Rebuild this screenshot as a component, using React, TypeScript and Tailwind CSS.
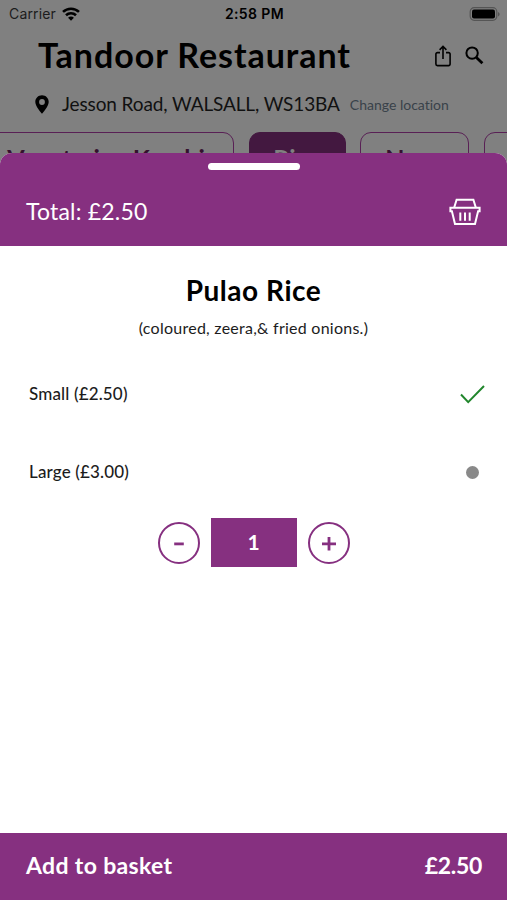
import type { ReactNode } from 'react'

const sizes = [
  { name: 'Small', price: '£2.50' },
  { name: 'Large', price: '£3.00' },
]

function WifiIcon() {
  return (
    <svg width="18" height="14" viewBox="0 0 18 14" fill="none" stroke="#000" strokeWidth="2.6">
      <path d="M1 4.9a11.6 11.6 0 0 1 16 0" />
      <path d="M4 8.3a7.2 7.2 0 0 1 10 0" />
      <path d="M6.1 10.8a4 4 0 0 1 5.8 0L9 13.8z" fill="#000" stroke="none" />
    </svg>
  )
}

function BatteryIcon() {
  return (
    <svg width="31" height="14" viewBox="0 0 31 14">
      <rect x="1.2" y="0.7" width="26.6" height="12.6" rx="4" fill="none" stroke="#555" strokeWidth="1.2" />
      <rect x="3" y="2.5" width="23" height="9" rx="2" fill="#000" />
      <path d="M29 5v4.4c1.1-.5 1.6-1.3 1.6-2.2S30.1 5.5 29 5z" fill="#555" />
    </svg>
  )
}

function PinIcon() {
  return (
    <svg width="14" height="19" viewBox="0 0 14 19">
      <path
        fillRule="evenodd"
        fill="#000"
        d="M7 .3C3.2.3.3 3.2.3 6.9.3 11.4 7 18.6 7 18.6s6.7-7.2 6.7-11.7C13.7 3.2 10.8.3 7 .3zm0 3.8a2.9 2.9 0 1 1 0 5.8 2.9 2.9 0 0 1 0-5.8z"
      />
    </svg>
  )
}

function ShareIcon() {
  return (
    <svg width="16" height="22" viewBox="0 0 16 22" fill="none" stroke="#000" strokeWidth="1.6">
      <path d="M5 7.6H2.4a1.5 1.5 0 0 0-1.5 1.5v10a1.5 1.5 0 0 0 1.5 1.5h11.2a1.5 1.5 0 0 0 1.5-1.5v-10a1.5 1.5 0 0 0-1.5-1.5H11" />
      <path d="M8 14V1.5M4.6 4.9 8 1.5l3.4 3.4" />
    </svg>
  )
}

function SearchIcon() {
  return (
    <svg width="19" height="19" viewBox="0 0 19 19" fill="none" stroke="#000">
      <circle cx="7.1" cy="7.1" r="5.7" strokeWidth="2" />
      <path d="m11.4 11.4 6 5.9" strokeWidth="2.8" />
    </svg>
  )
}

function BasketIcon() {
  return (
    <svg width="32" height="28" viewBox="0 0 32 28" fill="none" stroke="#fff" strokeWidth="2">
      <path d="M5.2 9.5 7.6 1.8h16.8l2.4 7.7" />
      <path d="M1.4 9.8h29.2v3.4h-1.5L26 26H6L2.9 13.2H1.4z" />
      <path d="M11.3 14.5v8.2M16 14.5v8.2M20.7 14.5v8.2" />
    </svg>
  )
}

function Chip({ className, children }: { className: string; children?: ReactNode }) {
  return (
    <div className={`h-12 shrink-0 rounded-[11px] border pt-[11px] text-center text-[25px] leading-7 font-bold whitespace-nowrap ${className}`}>
      {children}
    </div>
  )
}

function RoundButton({ label, children }: { label: string; children: ReactNode }) {
  return (
    <button aria-label={label} className="flex size-[42px] items-center justify-center rounded-full border-2 border-[#863080]">
      <svg width="16" height="16" viewBox="0 0 16 16" stroke="#863080" strokeWidth="2.8">
        {children}
      </svg>
    </button>
  )
}

export default function App() {
  return (
    <div className="relative h-[900px] w-[507px] overflow-hidden bg-[#808080] font-['Lato',sans-serif] text-black [font-variant-ligatures:none]">
      {/* Status bar */}
      <div className="grid h-7 grid-cols-3 items-center pr-[7px] pb-px pl-[9px] font-['Inter',sans-serif] text-[14px]">
        <div className="flex items-center gap-1.5 text-[#1c1c1c]">
          <span className="tracking-[0.15px]">Carrier</span>
          <WifiIcon />
        </div>
        <div className="text-center font-semibold tracking-[0.4px] whitespace-nowrap">2:58 PM</div>
        <div className="flex justify-end">
          <BatteryIcon />
        </div>
      </div>

      {/* Restaurant */}
      <div className="flex h-[55px] items-center pr-[23px] pl-[38px]">
        <h1 className="flex-1 pb-px text-[34px] leading-[52px] font-bold tracking-[0.95px] whitespace-nowrap">Tandoor Restaurant</h1>
        <ShareIcon />
        <div className="w-[14px]" />
        <SearchIcon />
      </div>
      <div className="flex h-[43px] items-center pl-[35px] whitespace-nowrap">
        <PinIcon />
        <span className="ml-[13px] text-[19px] tracking-[-0.12px] text-[#111]">Jesson Road, WALSALL, WS13BA</span>
        <span className="ml-[10px] text-[14px] text-[#39424a]">Change location</span>
      </div>
      <div className="mt-[6px] flex gap-[14.5px]">
        <Chip className="-ml-5 w-[254px] pr-[2px] border-[#592055] text-[#35112f]">Vegetarian Karahi</Chip>
        <Chip className="w-[97px] border-[#431840] bg-[#431840] text-[#808080]">Rice</Chip>
        <Chip className="w-[109px] border-[#592055] text-[#35112f]">Naan</Chip>
        <Chip className="w-[100px] border-[#592055]" />
      </div>

      {/* Bottom sheet */}
      <div className="absolute inset-x-0 top-[153px] bottom-0 flex flex-col overflow-hidden rounded-t-[12px] bg-white">
        <div className="h-[93px] bg-[#863080] pt-[10px] text-white">
          <div className="mx-auto h-[7px] w-[92px] rounded-full bg-white" />
          <div className="mt-[26px] flex h-8 items-center justify-between pr-[26px] pl-[26px]">
            <span className="pb-[2px] text-[23px] tracking-[0.2px]">Total: £2.50</span>
            <BasketIcon />
          </div>
        </div>

        <div className="flex-1">
          <h2 className="mt-[26px] text-center text-[28px] leading-9 font-bold tracking-[0.55px]">Pulao Rice</h2>
          <p className="mt-[8px] text-center text-[16px] leading-6 tracking-[0.25px] text-[#1c1c1c]">(coloured, zeera,&amp; fried onions.)</p>
          <div className="mt-[42px] flex flex-col gap-[54px] pr-[22px] pl-[29px] text-[17px] leading-6 font-medium tracking-[0.15px] text-[#1c1c1c]">
            {sizes.map((size, i) => (
              <div key={size.name} className="flex h-6 items-center justify-between">
                <span>{size.name} ({size.price})</span>
                {i === 0 ? (
                  <svg width="25" height="19" viewBox="0 0 25 19" fill="none" stroke="#21862c" strokeWidth="2">
                    <path d="m1 9.5 7.2 7.6L24 1" />
                  </svg>
                ) : (
                  <div className="mr-[6px] size-[13px] rounded-full bg-[#898989]" />
                )}
              </div>
            ))}
          </div>
          <div className="mt-[34px] flex items-center justify-center gap-[11px]">
            <RoundButton label="Remove one">
              <path d="M3.2 8.9h9.6" />
            </RoundButton>
            <div className="flex h-[49px] w-[86px] items-center justify-center bg-[#863080] pb-px text-[21px] font-bold text-white">1</div>
            <RoundButton label="Add one">
              <path d="M1 8.9h14M8 2v13.6" />
            </RoundButton>
          </div>
        </div>

        <div className="flex h-[67px] items-center justify-between bg-[#863080] pr-[25px] pb-[2px] pl-[26px] text-[23px] font-bold text-white">
          <span className="tracking-[0.35px]">Add to basket</span>
          <span className="tracking-[-0.3px]">£2.50</span>
        </div>
      </div>
    </div>
  )
}
